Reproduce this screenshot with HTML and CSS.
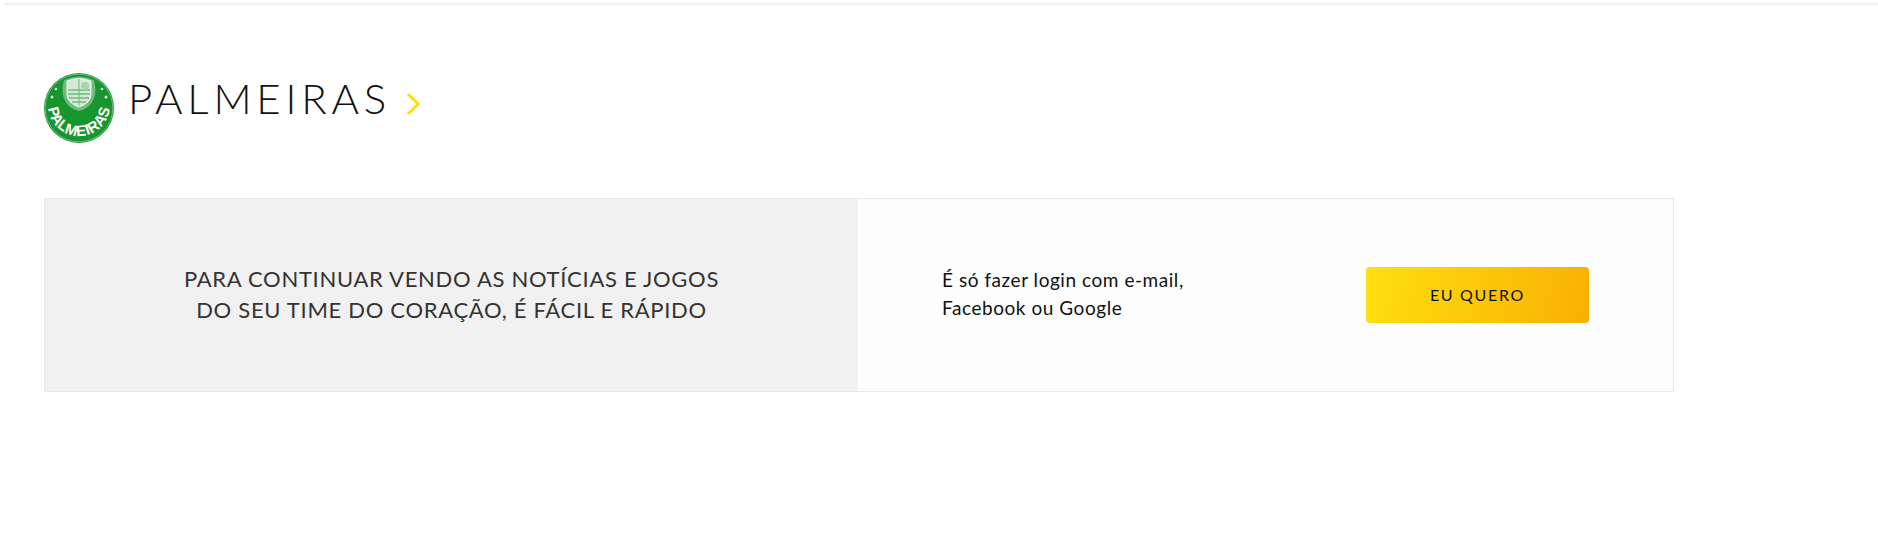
FILE: index.html
```html
<!DOCTYPE html>
<html lang="pt-BR">
<head>
    <meta charset="UTF-8">
    <title>Palmeiras</title>
    <link rel="stylesheet" href="styles.css">
</head>
<body>
    <div class="top-line"></div>
    <div class="content">
        <div class="team-header">
            <svg class="team-badge" viewBox="0 0 70 70" width="70" height="70">
                <defs>
                    <path id="badgeArc" d="M4 32 A31 31 0 0 0 66 32"/>
                </defs>
                <circle cx="35" cy="35" r="35" fill="#17962f"/>
                <circle cx="35" cy="35" r="33.8" fill="none" stroke="#bfe3c6" stroke-width="0.5"/>
                <path d="M20 7 Q35 0 50 7 Q54 22 47 31 Q41 37 35 38 Q29 37 23 31 Q16 22 20 7 Z" fill="#6dbb7e"/>
                <path d="M23 8 Q35 3 47 8 L47 21 Q47 30 35 34 Q23 30 23 21 Z" fill="#d4ead7" stroke="#f4fbf5" stroke-width="1"/>
                <path d="M24 17 H46 M24 21 H46 M25 25 H45 M28 29 H42" stroke="#6dbb7e" stroke-width="1.3"/>
                <path d="M35 6 V33" stroke="#6dbb7e" stroke-width="1"/>
                <circle cx="41" cy="13" r="4" fill="#a5d6ae"/>
                <circle cx="8" cy="24" r="1.5" fill="#d8ecd9"/>
                <circle cx="62" cy="24" r="1.5" fill="#d8ecd9"/>
                <circle cx="12" cy="16" r="1.3" fill="#d8ecd9"/>
                <circle cx="58" cy="16" r="1.3" fill="#d8ecd9"/>
                <text class="badge-text"><textPath href="#badgeArc" startOffset="50%" text-anchor="middle">PALMEIRAS</textPath></text>
            </svg>
            <h1 class="team-name">PALMEIRAS</h1>
            <svg class="team-arrow" viewBox="0 0 14 22" width="14" height="22">
                <path d="M2 1 L12 11 L2 21" fill="none" stroke="#ffdc0f" stroke-width="3"/>
            </svg>
        </div>

        <div class="login-card">
            <div class="login-message">PARA CONTINUAR VENDO AS NOTÍCIAS E JOGOS<br>DO SEU TIME DO CORAÇÃO, É FÁCIL E RÁPIDO</div>
            <div class="login-action">
                <p class="login-text">É só fazer login com e-mail,<br>Facebook ou Google</p>
                <a class="login-button" href="#">EU QUERO</a>
            </div>
        </div>
    </div>
</body>
</html>
```

FILE: styles.css
```css
body {
    margin: 0;
    background: #fff;
    color: #111;
    font-family: Lato, "Open Sans", sans-serif;
}
.top-line {
    height: 2px;
    margin: 3px 0 0 4px;
    background: #eeeeee;
}
.content {
    padding: 68px 0 0 44px;
}
.team-header {
    display: flex;
    align-items: center;
    height: 70px;
}
.team-badge {
    flex: none;
}
.badge-text {
    font-family: "Liberation Sans", sans-serif;
    font-size: 15px;
    font-weight: 700;
    letter-spacing: 0.4px;
    fill: #fff;
}
.team-name {
    margin: 0 0 20px 14px;
    font-size: 42px;
    font-weight: 300;
    letter-spacing: 4.8px;
}
.team-arrow {
    margin: 0 0 8px 15px;
}
.login-card {
    display: flex;
    width: 1628px;
    height: 192px;
    margin-top: 55px;
    border: 1px solid #e8e8e8;
}
.login-message {
    width: 813px;
    padding-bottom: 2px;
    box-sizing: border-box;
    display: flex;
    align-items: center;
    justify-content: center;
    text-align: center;
    background: #f1f1f1;
    font-size: 22px;
    line-height: 31px;
    letter-spacing: 0.7px;
    color: #333;
}
.login-action {
    flex: 1;
    display: flex;
    align-items: center;
    justify-content: space-between;
    padding: 0 84px;
    background: #fdfdfd;
}
.login-text {
    margin: 0 0 2px;
    font-size: 19px;
    line-height: 28px;
    letter-spacing: 0.55px;
}
.login-button {
    width: 223px;
    height: 56px;
    padding-bottom: 2px;
    box-sizing: border-box;
    display: flex;
    align-items: center;
    justify-content: center;
    border-radius: 4px;
    background: linear-gradient(100deg, #ffdf10, #f9b000);
    color: #111;
    font-size: 16px;
    letter-spacing: 1.7px;
    text-decoration: none;
}
```
